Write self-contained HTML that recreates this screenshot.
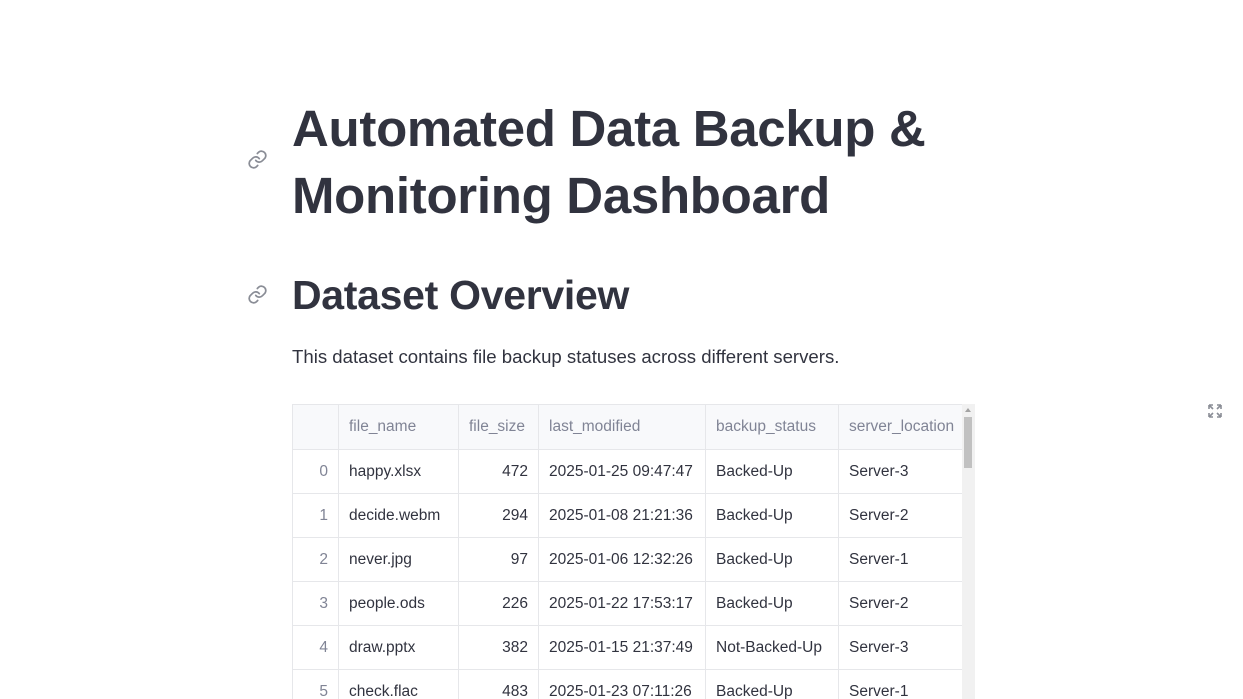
<!DOCTYPE html>
<html><head><style>
body{margin:0;background:#fff;font-family:"Liberation Sans",sans-serif;color:#31333f;width:1243px;height:699px;overflow:hidden;position:relative}
.a{position:absolute}
h1{position:absolute;left:292px;top:95px;margin:0;font-size:51px;line-height:67px;font-weight:bold;letter-spacing:-0.3px}
h2{position:absolute;left:292px;top:270px;margin:0;font-size:41px;line-height:50px;font-weight:bold;letter-spacing:-0.3px}
p{position:absolute;left:292px;top:345px;margin:0;font-size:18.6px;line-height:24px}
table{position:absolute;left:292px;top:404px;border-collapse:collapse;font-size:15.5px;table-layout:fixed}
td,th{border:1px solid #e6e7ea;height:43px;padding:0 10px;white-space:nowrap;overflow:hidden;font-weight:normal;text-align:left}
th{background:#f8f9fb;color:#808495;height:44px}
td.i{color:#808495;text-align:right}
td.n{text-align:right}
.wrap{position:absolute;left:292px;top:404px;width:683px;height:295px;overflow:hidden}
</style></head><body>
<svg class="a" style="left:247px;top:149px" width="21" height="21" viewBox="0 0 24 24" fill="none" stroke="#8a8d96" stroke-width="2" stroke-linecap="round"><path d="M10 13a5 5 0 0 0 7.5.5l3-3a5 5 0 0 0-7-7l-1.7 1.7"/><path d="M14 11a5 5 0 0 0-7.5-.5l-3 3a5 5 0 0 0 7 7l1.7-1.7"/></svg>
<h1>Automated Data Backup &amp;<br>Monitoring Dashboard</h1>
<svg class="a" style="left:247px;top:284px" width="21" height="21" viewBox="0 0 24 24" fill="none" stroke="#8a8d96" stroke-width="2" stroke-linecap="round"><path d="M10 13a5 5 0 0 0 7.5.5l3-3a5 5 0 0 0-7-7l-1.7 1.7"/><path d="M14 11a5 5 0 0 0-7.5-.5l-3 3a5 5 0 0 0 7 7l1.7-1.7"/></svg>
<h2>Dataset Overview</h2>
<p>This dataset contains file backup statuses across different servers.</p>
<div class="wrap">
<table style="left:0;top:0">
<colgroup><col style="width:46px"><col style="width:120px"><col style="width:80px"><col style="width:167px"><col style="width:133px"><col style="width:124px"></colgroup>
<tr><th></th><th>file_name</th><th>file_size</th><th>last_modified</th><th>backup_status</th><th>server_location</th></tr>
<tr><td class="i">0</td><td>happy.xlsx</td><td class="n">472</td><td>2025-01-25 09:47:47</td><td>Backed-Up</td><td>Server-3</td></tr>
<tr><td class="i">1</td><td>decide.webm</td><td class="n">294</td><td>2025-01-08 21:21:36</td><td>Backed-Up</td><td>Server-2</td></tr>
<tr><td class="i">2</td><td>never.jpg</td><td class="n">97</td><td>2025-01-06 12:32:26</td><td>Backed-Up</td><td>Server-1</td></tr>
<tr><td class="i">3</td><td>people.ods</td><td class="n">226</td><td>2025-01-22 17:53:17</td><td>Backed-Up</td><td>Server-2</td></tr>
<tr><td class="i">4</td><td>draw.pptx</td><td class="n">382</td><td>2025-01-15 21:37:49</td><td>Not-Backed-Up</td><td>Server-3</td></tr>
<tr><td class="i">5</td><td>check.flac</td><td class="n">483</td><td>2025-01-23 07:11:26</td><td>Backed-Up</td><td>Server-1</td></tr>
</table>
<div class="a" style="left:670px;top:0;width:13px;height:295px;background:#f1f1f1"></div>
<div class="a" style="left:673px;top:4px;border:3px solid transparent;border-bottom:4px solid #a3a3a3;border-top:0"></div>
<div class="a" style="left:672px;top:13px;width:8px;height:51px;background:#c1c1c1"></div>
</div>
<svg class="a" style="left:1207px;top:403px" width="16" height="16" viewBox="0 0 16 16" fill="none" stroke="#8a8d96" stroke-width="1.6"><path d="M2 2l4 4M2 2v4M2 2h4M14 14l-4-4M14 14v-4M14 14h-4M14 2l-4 4M14 2v4M14 2h-4M2 14l4-4M2 14v-4M2 14h4"/></svg>
</body></html>
